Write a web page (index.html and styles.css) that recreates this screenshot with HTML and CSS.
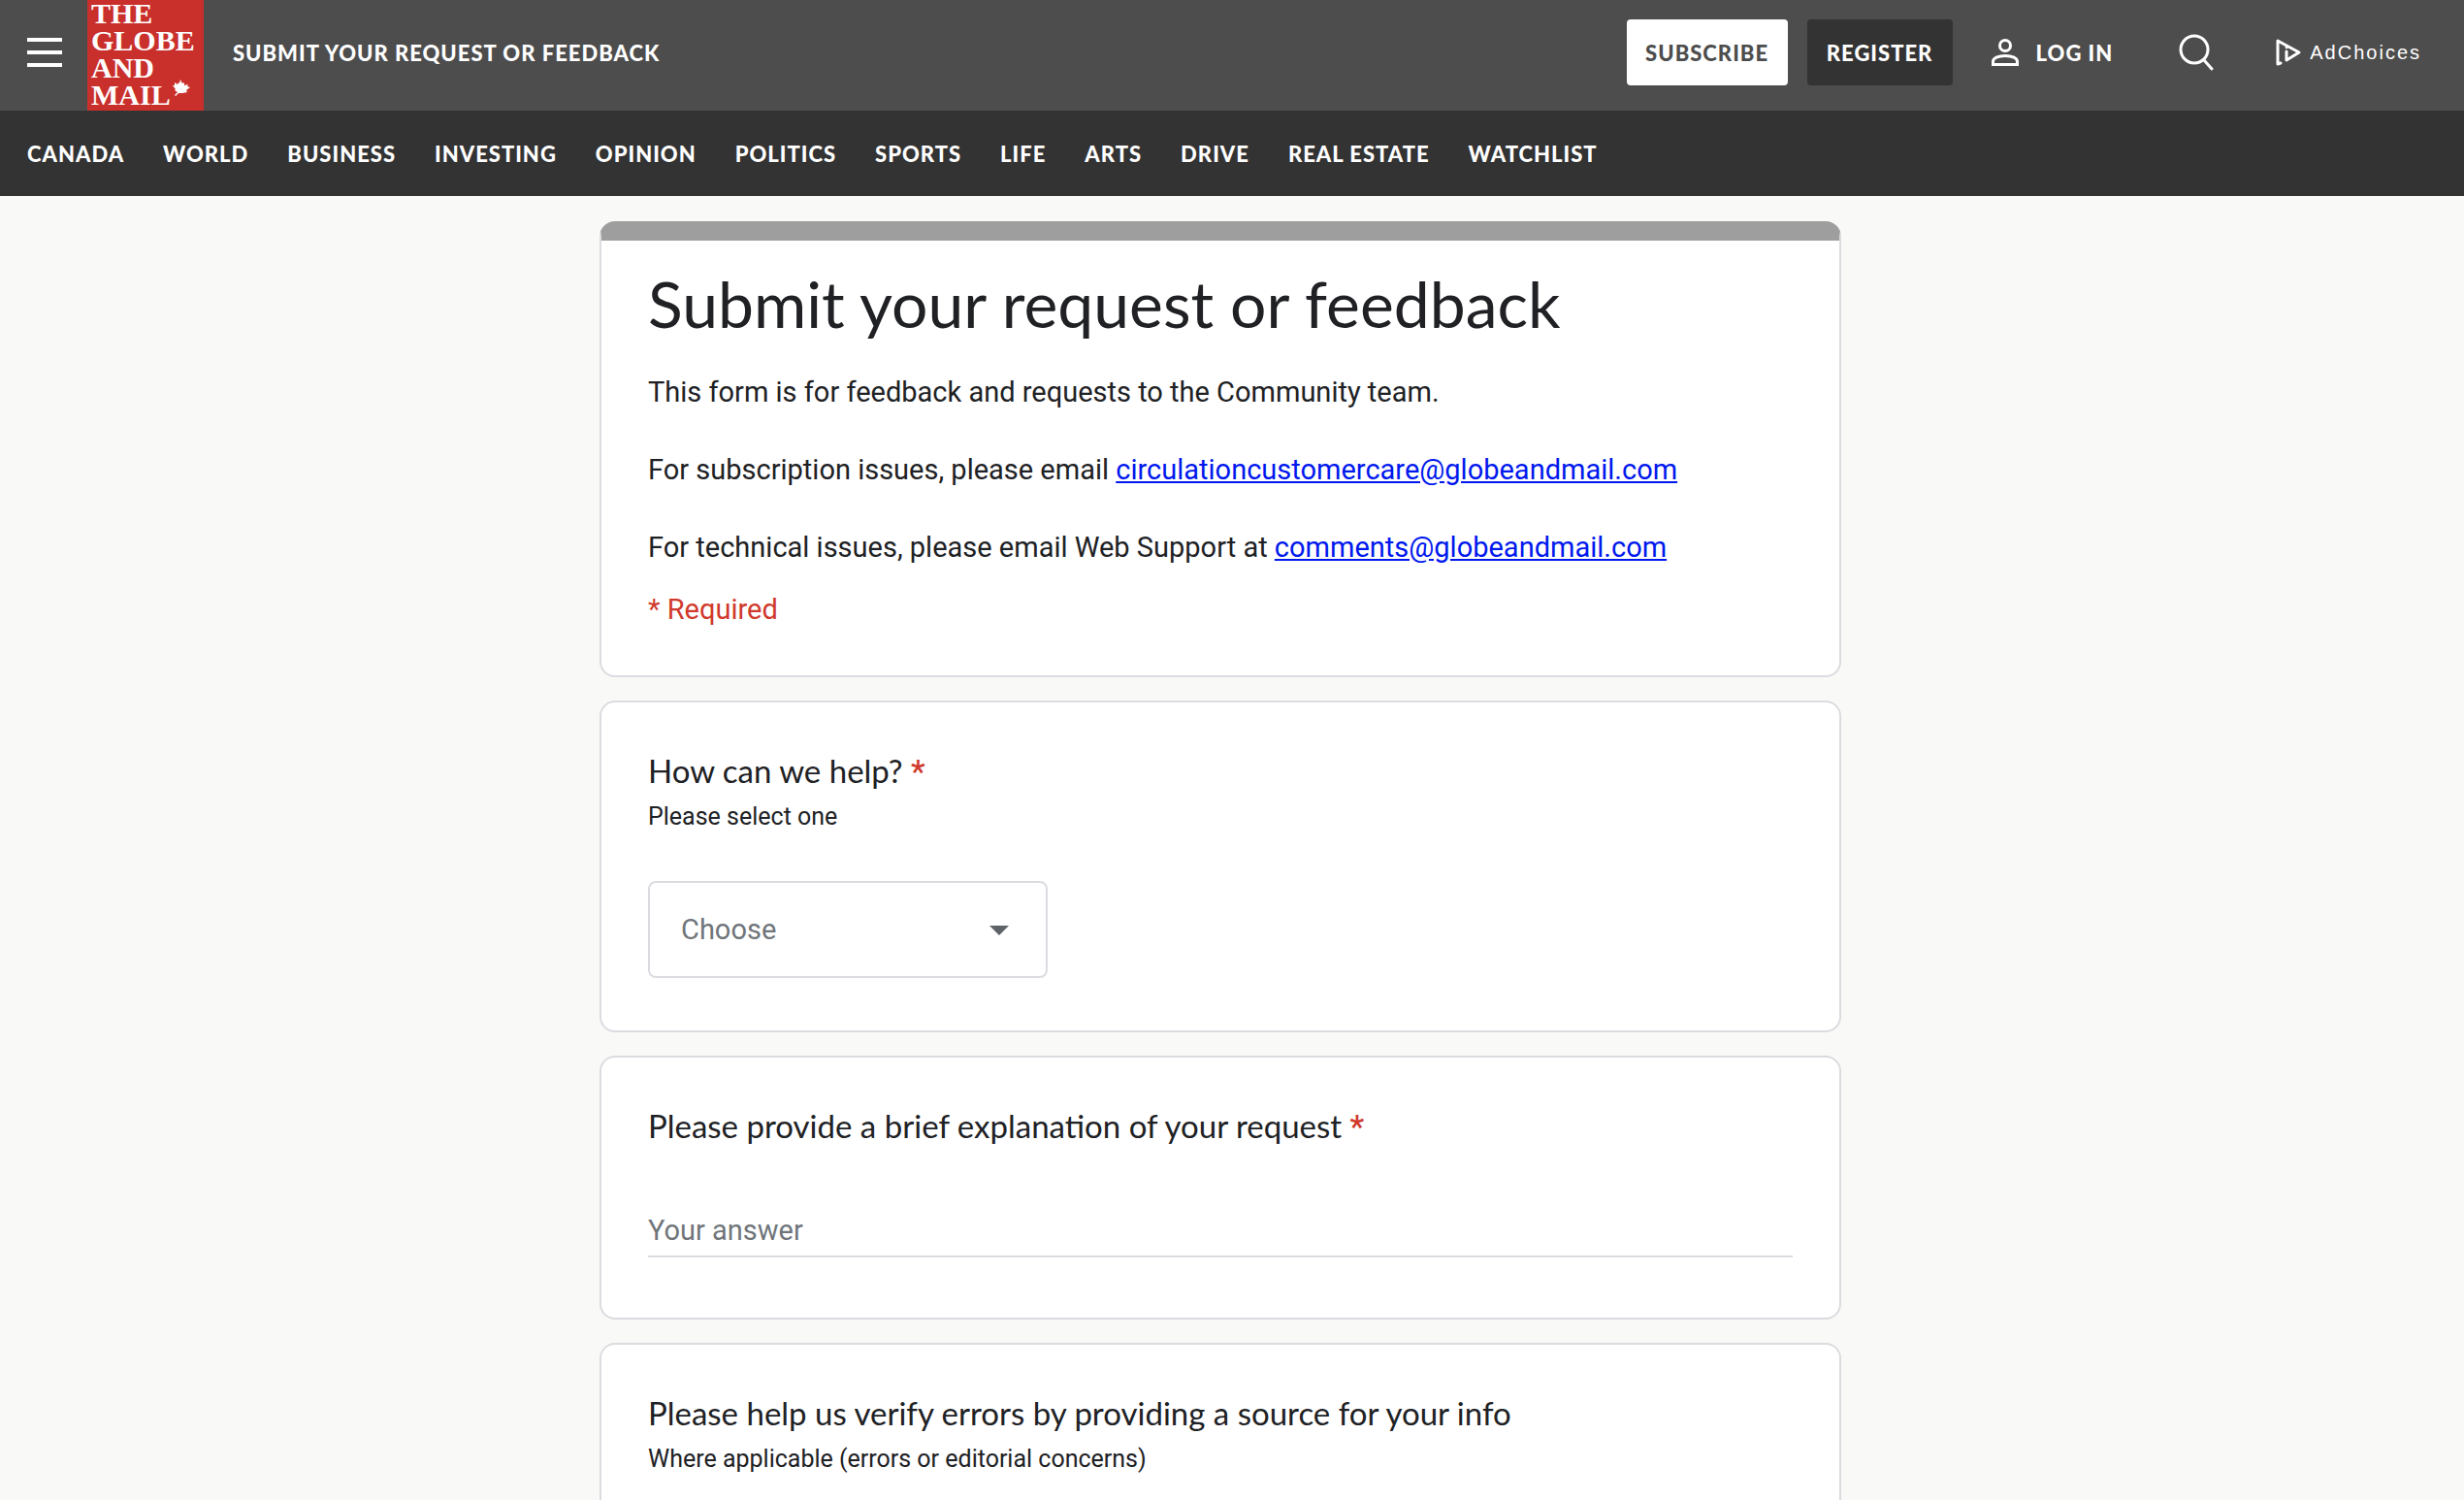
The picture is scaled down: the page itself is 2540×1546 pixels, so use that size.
FILE: index.html
```html
<!DOCTYPE html>
<html lang="en">
<head>
<meta charset="utf-8">
<title>Submit your request or feedback - The Globe and Mail</title>
<meta name="viewport" content="width=device-width, initial-scale=1">
<link rel="stylesheet" href="styles.css">
</head>
<body>
<header class="topbar">
  <button class="menu" type="button" aria-label="Menu"><span></span><span></span><span></span></button>
  <a class="logo" href="#" aria-label="The Globe and Mail">
    <svg viewBox="0 0 120 114" width="120" height="114" aria-hidden="true">
      <g class="logo-words">
        <text x="4" y="24">THE</text>
        <text x="4" y="52">GLOBE</text>
        <text x="4" y="80">AND</text>
        <text x="4" y="108">MAIL</text>
      </g>
      <path fill="#fff" d="M96 82l2 4 2-1 0 3 4-1-1 2 3 1-4 3 1 2-5 1-4 0-3 3-1-1 3-3-3-2 1-1-3-4 2 0 0-3 3 2 1-2 1 1z"/>
    </svg>
  </a>
  <p class="page-name">SUBMIT YOUR REQUEST OR FEEDBACK</p>
  <div class="actions">
    <button class="btn btn-light" type="button">SUBSCRIBE</button>
    <button class="btn btn-dark" type="button">REGISTER</button>
    <a class="login" href="#">
      <svg width="28" height="28" viewBox="0 0 28 28" fill="none" stroke="#fff" stroke-width="3" aria-hidden="true"><circle cx="14" cy="7" r="5.500"/><path d="M1.500 26.500v-3c0-3.500 5-6 12.500-6s12.500 2.500 12.500 6v3z"/></svg>
      LOG IN
    </a>
    <button class="search" type="button" aria-label="Search">
      <svg width="36" height="38" viewBox="0 0 36 38" fill="none" stroke="#fff" stroke-width="3" stroke-linecap="round" aria-hidden="true"><circle cx="16" cy="16" r="14"/><path d="M26 27l8 9"/></svg>
    </button>
    <a class="adchoices" href="#">
      <svg width="28" height="30" viewBox="0 0 28 30" fill="none" stroke="#fff" stroke-width="3" stroke-linejoin="round" stroke-linecap="round" aria-hidden="true"><path d="M6 26l-3 1V3l22 12-13 8v-9"/><circle cx="12" cy="10" r="1" stroke-width="1" fill="#fff"/></svg>
      AdChoices
    </a>
  </div>
</header>
<nav class="sections" aria-label="Sections">
  <a href="#">CANADA</a><a href="#">WORLD</a><a href="#">BUSINESS</a><a href="#">INVESTING</a><a href="#">OPINION</a><a href="#">POLITICS</a><a href="#">SPORTS</a><a href="#">LIFE</a><a href="#">ARTS</a><a href="#">DRIVE</a><a href="#">REAL ESTATE</a><a href="#">WATCHLIST</a>
</nav>
<main>
  <form class="form">
    <section class="card intro">
      <h1>Submit your request or feedback</h1>
      <p>This form is for feedback and requests to the Community team.</p>
      <p>For subscription issues, please email <a href="mailto:circulationcustomercare@globeandmail.com">circulationcustomercare@globeandmail.com</a></p>
      <p>For technical issues, please email Web Support at <a href="mailto:comments@globeandmail.com">comments@globeandmail.com</a></p>
      <p class="required">* Required</p>
    </section>
    <section class="card">
      <label class="question" for="topic">How can we help? <span class="star">*</span></label>
      <p class="hint">Please select one</p>
      <div class="picker">
        <select id="topic"><option>Choose</option></select>
        <svg class="caret" width="20" height="10" viewBox="0 0 20 10" aria-hidden="true"><path d="M0 0h20L10 10z" fill="#5f6368"/></svg>
      </div>
    </section>
    <section class="card">
      <label class="question" for="explanation">Please provide a brief explanation of your request <span class="star">*</span></label>
      <input class="answer" id="explanation" type="text" placeholder="Your answer">
    </section>
    <section class="card">
      <label class="question" for="source">Please help us verify errors by providing a source for your info</label>
      <p class="hint">Where applicable (errors or editorial concerns)</p>
      <input class="answer" id="source" type="text" placeholder="Your answer">
    </section>
  </form>
</main>
</body>
</html>
```
FILE: styles.css
```css
* { box-sizing: border-box; }
body {
  margin: 0;
  height: 100vh;
  overflow: hidden;
  background: #f9f9f7;
  color: #202124;
  font-family: Roboto, sans-serif;
  font-size: 29px;
}
h1, p { margin: 0; font-weight: 400; }
button { font: inherit; border: 0; padding: 0; background: none; color: inherit; }

.topbar, .sections {
  font-family: Lato, sans-serif;
  font-size: 22px;
  font-weight: 900;
  letter-spacing: 1px;
  color: #fff;
}
.topbar { display: flex; align-items: center; padding: 0 44px 0 28px; background: #4d4d4d; }
.topbar a, .sections a { color: #fff; text-decoration: none; }
.menu { display: grid; gap: 9px; width: 36px; margin: 0 26px 6px 0; }
.menu span { height: 4px; background: #fff; }
.logo { display: block; background: #c9302c; }
.logo svg { display: block; }
.logo-words { font-family: "Liberation Serif", serif; font-size: 30px; font-weight: 700; fill: #fff; letter-spacing: 0; }
.page-name { margin: 0 auto 6px 30px; font-weight: inherit; }
.actions { display: flex; align-items: center; margin-bottom: 6px; }
.btn { height: 68px; border-radius: 4px; letter-spacing: 1px; }
.btn-light { width: 166px; background: #fff; color: #4d4d4d; margin-right: 20px; }
.btn-dark { width: 150px; background: #333; margin-right: 40px; }
.login { display: flex; align-items: center; gap: 18px; }
.search { display: flex; margin: 0 63px 0 68px; }
.adchoices { display: flex; align-items: center; gap: 8px; font: 400 20px "Liberation Sans", sans-serif; letter-spacing: 2px; }

.sections { display: flex; gap: 40px; align-items: center; min-height: 88px; padding: 0 28px; background: #333; }

main { padding: 26px 24px 26px 0; }
.form { display: grid; gap: 24px; max-width: 1280px; margin: 0 auto; }
.card { padding: 48px 48px 54px; border: 2px solid #dadce0; border-radius: 16px; background: #fff; }
.intro { border-top: 20px solid #9e9e9e; padding: 20px 48px 48px; }
.intro h1 { font-family: Lato, sans-serif; font-size: 66px; line-height: 90px; margin-bottom: 26px; }
.intro p { line-height: 40px; margin-bottom: 40px; }
.intro a { color: #0018ee; text-underline-offset: 2px; }
.intro .required { color: #d0392b; margin: -16px 0 0; }
.question { display: block; font-family: Lato, sans-serif; font-size: 33px; line-height: 44px; }
.star { color: #d0392b; font-family: Roboto, sans-serif; font-weight: 500; line-height: 0; }
.hint { font-size: 25px; line-height: 32px; margin-top: 10px; }
.picker { position: relative; max-width: 412px; margin-top: 50px; }
.picker select { display: block; appearance: none; width: 100%; height: 100px; padding: 0 32px; border: 2px solid #dadce0; border-radius: 8px; background: #fff; font: inherit; color: #70757a; }
.caret { position: absolute; right: 40px; top: 46px; }
.answer { display: block; width: 100%; height: 48px; margin: 66px 0 8px; padding: 0 0 6px; border: 0; border-bottom: 2px solid #dadce0; font: inherit; }
.answer::placeholder { color: #70757a; opacity: 1; }
```
